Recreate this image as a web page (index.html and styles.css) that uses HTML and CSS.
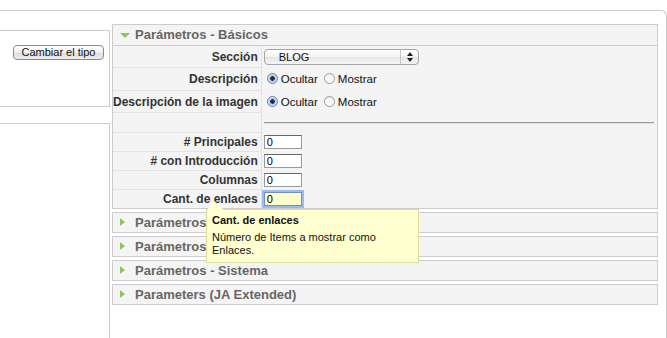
FILE: index.html
```html
<!DOCTYPE html>
<html lang="es">
<head>
    <meta charset="UTF-8">
    <title>Editar menú</title>
    <link rel="stylesheet" href="styles.css">
</head>
<body>
    <div class="wrap">
        <div class="left">
            <div class="box type-box">
                <button class="mac-btn" type="button">Cambiar el tipo</button>
            </div>
            <div class="box tall-box"></div>
        </div>

        <div class="right">
            <div class="panel">
                <h3 class="panel-title"><span class="arrow-down"></span>Parámetros - Básicos</h3>
                <table class="paramlist">
                    <tr class="row-select">
                        <td class="key">Sección</td>
                        <td class="val">
                            <div class="mac-select">
                                <span class="sel-text">BLOG</span>
                                <span class="sel-arrows"><i class="up"></i><i class="down"></i></span>
                            </div>
                        </td>
                    </tr>
                    <tr class="row-radio">
                        <td class="key">Descripción</td>
                        <td class="val">
                            <span class="radio checked"></span><span class="opt">Ocultar</span>
                            <span class="radio"></span><span class="opt">Mostrar</span>
                        </td>
                    </tr>
                    <tr class="row-radio2">
                        <td class="key">Descripción de la imagen</td>
                        <td class="val">
                            <span class="radio checked"></span><span class="opt">Ocultar</span>
                            <span class="radio"></span><span class="opt">Mostrar</span>
                        </td>
                    </tr>
                    <tr class="row-spacer">
                        <td class="key"></td>
                        <td class="val"><div class="rule"></div></td>
                    </tr>
                    <tr class="row-text">
                        <td class="key"># Principales</td>
                        <td class="val"><input class="num" type="text" value="0"></td>
                    </tr>
                    <tr class="row-text">
                        <td class="key"># con Introducción</td>
                        <td class="val"><input class="num" type="text" value="0"></td>
                    </tr>
                    <tr class="row-text">
                        <td class="key">Columnas</td>
                        <td class="val"><input class="num" type="text" value="0"></td>
                    </tr>
                    <tr class="row-text">
                        <td class="key">Cant. de enlaces</td>
                        <td class="val"><input class="num focused" type="text" value="0"></td>
                    </tr>
                </table>
            </div>

            <div class="panel closed">
                <h3 class="panel-title"><span class="arrow-right"></span>Parámetros - Avanzados</h3>
            </div>
            <div class="panel closed">
                <h3 class="panel-title"><span class="arrow-right"></span>Parámetros - Componente</h3>
            </div>
            <div class="panel closed">
                <h3 class="panel-title"><span class="arrow-right"></span>Parámetros - Sistema</h3>
            </div>
            <div class="panel closed">
                <h3 class="panel-title"><span class="arrow-right"></span>Parameters (JA Extended)</h3>
            </div>

            <!-- tooltip for the focused field -->
            <div class="tip">
                <span class="tip-arrow"></span>
                <div class="tip-title">Cant. de enlaces</div>
                <div class="tip-text">Número de Items a mostrar como Enlaces.</div>
            </div>
        </div>
    </div>
</body>
</html>
```

FILE: styles.css
```css
  body {
      margin: 0;
      padding: 0;
      background-color: white;
      font-family: 'Liberation Sans', Arial, sans-serif;
      font-size: 11px;
      color: #333;
      overflow: hidden;
  }
  .wrap {
      margin-top: 10px;
      width: 666px;
      height: 327px;
      overflow: hidden;
      border-top: 1px solid #ccc;
      border-right: 1px solid #ccc;
      border-top-right-radius: 6px;
      display: flex;
      align-items: flex-start;
  }
  .left {
      width: 110px;
      flex: none;
  }
  .box {
      border: 1px solid #ccc;
      border-left: none;
      width: 109px;
  }
  .type-box {
      margin-top: 19px;
      height: 75px;
  }
  .tall-box {
      margin-top: 16px;
      height: 230px;
  }
  .mac-btn {
      display: block;
      margin: 14px 0 0 13px;
      width: 91px;
      height: 15px;
      padding: 0;
      border: 1px solid #8a8a8a;
      border-radius: 4px;
      background: linear-gradient(#ffffff, #f0f0f0 50%, #dcdcdc 51%, #eeeeee);
      font-family: 'Liberation Sans', Arial, sans-serif;
      font-size: 11px;
      line-height: 13px;
      color: #111;
  }
  .right {
      position: relative;
      margin-left: 2px;
      margin-top: 13px;
      width: 546px;
  }
  .panel {
      border: 1px solid #ccc;
      background-color: #f4f4f4;
      margin-bottom: 3px;
  }
  .panel-title {
      margin: 0;
      height: 20px;
      line-height: 20px;
      padding-left: 22px;
      position: relative;
      font-size: 13px;
      font-weight: bold;
      color: #666;
      border-bottom: 1px solid #ccc;
  }
  .closed .panel-title {
      border-bottom: none;
      height: 19px;
      line-height: 19px;
  }
  .arrow-down {
      position: absolute;
      left: 7px;
      top: 8px;
      width: 0;
      height: 0;
      border-left: 5px solid transparent;
      border-right: 5px solid transparent;
      border-top: 5px solid #8cc65a;
  }
  .arrow-right {
      position: absolute;
      left: 7px;
      top: 5px;
      width: 0;
      height: 0;
      border-top: 4px solid transparent;
      border-bottom: 4px solid transparent;
      border-left: 5px solid #8cc65a;
  }
  .paramlist {
      width: 100%;
      border-collapse: collapse;
  }
  .paramlist td {
      padding: 0;
      vertical-align: middle;
  }
  .paramlist td.key {
      width: 143px;
      padding-right: 3px;
      text-align: right;
      font-size: 12px;
      font-weight: bold;
      color: #333;
      white-space: nowrap;
      border-bottom: 1px solid #e3e3e3;
      border-right: 1px solid #e3e3e3;
  }
  .paramlist td.val {
      padding-left: 2px;
  }
  .row-select td { height: 21px; }
  .row-radio td { height: 22px; }
  .row-radio2 td { height: 21px; }
  .row-spacer td { height: 19px; }
  .row-text td { height: 18px; }
  .paramlist tr:last-child td.key {
      border-bottom: none;
  }
  .mac-select {
      position: relative;
      width: 153px;
      height: 14px;
      border: 1px solid #a5a5a5;
      border-radius: 4px;
      background: linear-gradient(#ffffff, #f3f3f3 50%, #e6e6e6 51%, #f4f4f4);
  }
  .sel-text {
      position: absolute;
      left: 14px;
      top: 0;
      line-height: 14px;
      color: #111;
  }
  .sel-arrows {
      position: absolute;
      right: 0;
      top: 0;
      width: 17px;
      height: 14px;
      border-left: 1px solid #c6c6c6;
  }
  .sel-arrows i {
      position: absolute;
      left: 6px;
      width: 0;
      height: 0;
      border-left: 3px solid transparent;
      border-right: 3px solid transparent;
  }
  .sel-arrows .up {
      top: 2px;
      border-bottom: 4px solid #222;
  }
  .sel-arrows .down {
      top: 8px;
      border-top: 4px solid #222;
  }
  .radio {
      display: inline-block;
      vertical-align: -1px;
      width: 9px;
      height: 9px;
      margin-left: 3px;
      margin-right: 3px;
      border: 1px solid #9a9a9a;
      border-radius: 50%;
      background: linear-gradient(#f0f0f0, #ffffff);
      position: relative;
  }
  .radio.checked {
      border-color: #6b7fa6;
      background: radial-gradient(circle, #1c2f55 0, #1c2f55 2px, #a9c2e6 2.5px, #e4edf8 5px);
  }
  .opt {
      color: #111;
      font-size: 11.5px;
  }
  .rule {
      margin-left: 0;
      margin-right: 3px;
      border-top: 1px solid #9c9c9c;
      border-bottom: 1px solid #e0e0e0;
  }
  .num {
      display: block;
      box-sizing: border-box;
      width: 38px;
      height: 14px;
      padding: 0 2px;
      border: 1px solid #9a9a9a;
      border-top-color: #666;
      background-color: white;
      font-family: 'Liberation Sans', Arial, sans-serif;
      font-size: 11px;
      color: #000;
  }
  .num.focused {
      background-color: #ffffcc;
      border-color: #6e8fc8;
      box-shadow: 0 0 0 2px #9bbbeb;
  }
  .tip {
      position: absolute;
      left: 94px;
      top: 185px;
      width: 202px;
      height: 44px;
      padding: 4px 4px 4px 5px;
      background-color: #ffffcf;
      border: 1px solid #dede9c;
      color: #111;
  }
  .tip-arrow {
      position: absolute;
      left: 0;
      top: -9px;
      width: 0;
      height: 0;
      border-left: 7px solid transparent;
      border-right: 10px solid transparent;
      border-bottom: 9px solid #ffffcf;
  }
  .tip-title {
      font-weight: bold;
      font-size: 11px;
      margin-bottom: 5px;
  }
  .tip-text {
      font-size: 11px;
      line-height: 13px;
      width: 180px;
  }
```
